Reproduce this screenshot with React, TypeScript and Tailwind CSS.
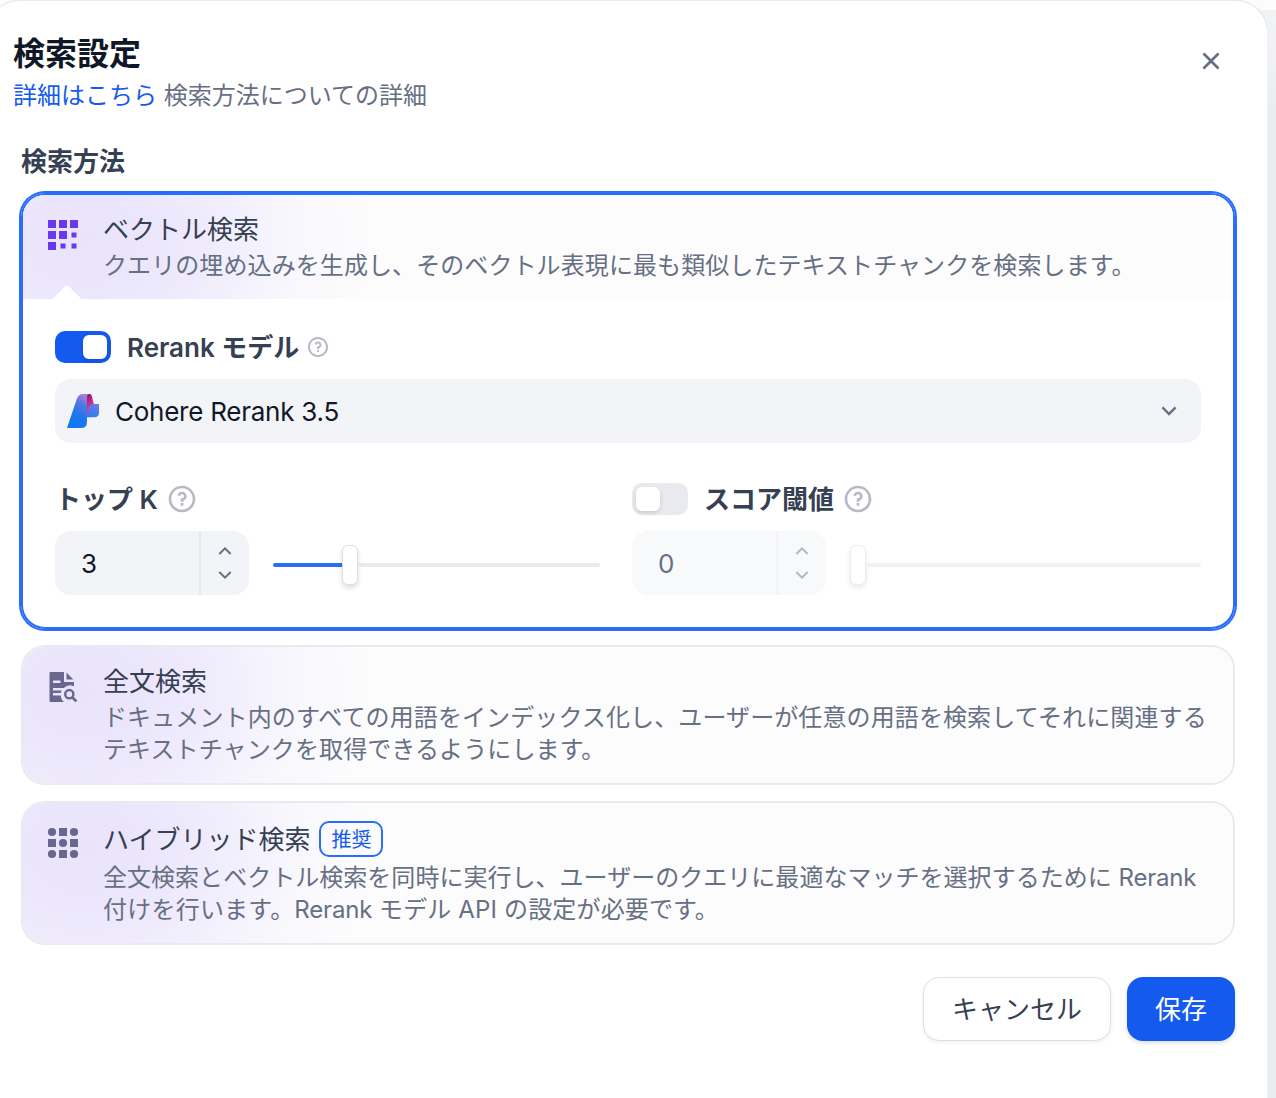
import type { ReactNode } from 'react'
import { RiArrowDownSLine, RiArrowUpSLine, RiCloseLine, RiQuestionLine } from 'react-icons/ri'

function VectorIcon() {
  return (
    <svg width="32" height="32" viewBox="0 0 32 32" fill="#6938ef">
      <path d="M1 1h8v8H1zM12 1h8v8h-8zM23 1h8v8h-8zM1 12h8v8H1zM12 12h8v8h-8zM24.5 13.5h5v5h-5zM1 23h8v8H1zM13.5 24.5h5v5h-5zM24.5 24.5h5v5h-5z" />
    </svg>
  )
}

function FullTextIcon() {
  return (
    <svg width="32" height="32" viewBox="0 0 32 32" className="text-[#68678f]">
      <g fill="currentColor" transform="translate(-0.5 0)">
        <path fillRule="evenodd" d="M4 1H17.5V11H27.5V15.4A8.5 8.5 0 0 0 17.3 17H6.5V19.5H15.2A8 8 0 0 0 14.3 22H6.5V24.5H14.4A8.5 8.5 0 0 0 17.6 31H4A1 1 0 0 1 3 30V2A1 1 0 0 1 4 1ZM6.5 9.5V12H14V9.5Z" />
        <path d="M20 1.6L26.8 8.5H20Z" />
      </g>
      <circle cx="22.3" cy="23.2" r="4.1" fill="none" stroke="currentColor" strokeWidth="2.5" />
      <path d="M25.2 26.2L29.4 30.4" stroke="currentColor" strokeWidth="2.7" />
    </svg>
  )
}

function HybridIcon() {
  return (
    <svg width="32" height="32" viewBox="0 0 32 32" fill="#68678f">
      <circle cx="5" cy="5" r="4.1" />
      <circle cx="27" cy="5" r="4.1" />
      <circle cx="16" cy="16" r="4.1" />
      <circle cx="5" cy="27" r="4.1" />
      <circle cx="27" cy="27" r="4.1" />
      <path d="M12 1h8v8h-8zM1 12h8v8H1zM23 12h8v8h-8zM12 23h8v8h-8z" />
    </svg>
  )
}

function ModelLogo() {
  return (
    <svg width="32" height="34" viewBox="0 0 32 34">
      <defs>
        <linearGradient id="logo-body" x1="0.75" y1="0" x2="0.4" y2="1">
          <stop offset="0" stopColor="#b67adb" />
          <stop offset="0.3" stopColor="#4c78e4" />
          <stop offset="0.65" stopColor="#1c75ec" />
          <stop offset="1" stopColor="#0f7af2" />
        </linearGradient>
        <linearGradient id="logo-side" x1="0" y1="0" x2="0.2" y2="1">
          <stop offset="0" stopColor="#6b1d68" />
          <stop offset="0.45" stopColor="#c92a8c" />
          <stop offset="1" stopColor="#f33fae" />
        </linearGradient>
        <linearGradient id="logo-arm" x1="0.7" y1="0" x2="0.3" y2="1">
          <stop offset="0" stopColor="#6a7be6" />
          <stop offset="1" stopColor="#2a7bee" />
        </linearGradient>
      </defs>
      <path d="M19 0H22.5Q24.3 0 24.8 2L27 11V23H20Z" fill="url(#logo-side)" />
      <path d="M26.5 10H32V18.5Q32 23.2 27.3 23.2H20V22Q21.5 20 21.8 15Q22.3 10 26.5 10Z" fill="url(#logo-arm)" />
      <path d="M16 0H22Q20 0 20 2.5V28Q20 34 14 34H0L9.7 5.2Q11.4 0 16 0Z" fill="url(#logo-body)" />
    </svg>
  )
}

function Toggle({ on }: { on?: boolean }) {
  return (
    <div className={`flex h-8 w-14 shrink-0 rounded-[10px] p-1 ${on ? 'justify-end bg-[#155aef]' : 'bg-[#e9eaef]'}`}>
      <div className="size-6 rounded-[6px] bg-white shadow-[0_2px_4px_rgba(16,24,40,0.14)]" />
    </div>
  )
}

function NumberInput({ value, disabled }: { value: string; disabled?: boolean }) {
  return (
    <div className={`flex h-16 w-[194px] shrink-0 rounded-2xl ${disabled ? 'bg-[#f8f9fb]' : 'bg-[#f2f4f7]'}`}>
      <div className={`w-[144px] pl-[26px] text-[26px] leading-[66px] ${disabled ? 'text-[#676f83]' : 'text-[#101828]'}`}>
        {value}
      </div>
      <div
        className={`flex flex-1 flex-col items-center justify-center border-l-2 ${disabled ? 'border-[#f4f4f7] text-[#b3b7c1]' : 'border-[#e9eaef] text-[#676f83]'}`}
      >
        <RiArrowUpSLine size={24} />
        <RiArrowDownSLine size={24} />
      </div>
    </div>
  )
}

function Glow({ children, className }: { children: ReactNode; className: string }) {
  return (
    <div
      className={`flex bg-[#fcfcfd] bg-[radial-gradient(ellipse_290px_240px_at_60px_44px,#e9e4fa_0%,#ebe6fb_22%,#efebfc_42%,#f5f3fd_62%,#f9f9fd_80%,#fcfcfd_100%)] ${className}`}
    >
      {children}
    </div>
  )
}

export default function App() {
  return (
    <div
      lang="ja"
      className="flex h-[1098px] w-[1276px] overflow-hidden bg-[linear-gradient(#fcfcfd_0,#fcfcfd_10px,#f2f3f7_10px,#f0f2f5_60px,#e9edf0_110px)] font-['Inter','Noto_Sans_CJK_JP',sans-serif] text-[#354052]"
    >
      <div className="-ml-[34px] h-[1200px] w-[1302px] shrink-0 rounded-tr-[34px] bg-[#fdfdfd]">
        <div className="ml-[22px] h-[1200px] w-[1279px] rounded-[32px] border-t border-[#e9eaeb] bg-white pl-[33px] pr-8 shadow-[0_0_2px_rgba(16,24,40,0.16)]">
          <div className="-ml-2 flex h-[143px] justify-between pt-[33px]">
            <div>
              <h1 className="h-10 text-[32px] font-bold leading-[40px] text-[#101828]">検索設定</h1>
              <p className="mt-1 text-[24px] leading-[36px] text-[#676f83]">
                <span className="text-[#155aef]">詳細はこちら</span> 検索方法についての詳細
              </p>
            </div>
            <RiCloseLine size={32} className="mr-2 mt-[11px] text-[#676f83]" />
          </div>
          <h2 className="h-[49px] text-[26px] font-bold leading-[36px]">検索方法</h2>

          <section className="h-[436px] w-[1214px] overflow-hidden rounded-3xl border-2 border-[#296dff] ring-2 ring-[#296dff]">
            <Glow className="h-[104px] pl-6">
              <div className="flex w-14 flex-col pt-6">
                <VectorIcon />
                <svg width="30" height="14" viewBox="0 0 30 14" className="ml-[5px] mt-auto" fill="white">
                  <path d="M0.5 14L12.5 2Q15 -0.6 17.5 2L29.5 14Z" />
                </svg>
              </div>
              <div className="pt-[17px]">
                <h3 className="text-[26px] leading-9">ベクトル検索</h3>
                <p className="whitespace-nowrap text-[24px] leading-9 tracking-[0.09px] text-[#676f83]">
                  クエリの埋め込みを生成し、そのベクトル表現に最も類似したテキストチャンクを検索します。
                </p>
              </div>
            </Glow>
            <div className="px-8 pt-8">
              <div className="flex h-8 items-center">
                <Toggle on />
                <span className="ml-4 pt-0.5 text-[26px] font-semibold leading-8">
                  Rerank モデル
                </span>
                <RiQuestionLine size={24} className="ml-[7px] text-[#b7b9c3]" />
              </div>
              <div className="mt-4 flex h-16 items-center rounded-2xl bg-[#f2f4f7] pl-3 pr-[18px]">
                <ModelLogo />
                <span className="ml-4 flex-1 pt-px text-[26px] tracking-[-0.25px] text-[#101828]">Cohere Rerank 3.5</span>
                <RiArrowDownSLine size={28} className="text-[#676f83]" />
              </div>
              <div className="mt-10 grid grid-cols-[545px_569px] gap-x-8">
                <div>
                  <div className="flex h-8 items-center">
                    <span className="pt-0.5 text-[26px] font-semibold leading-8">トップ K</span>
                    <RiQuestionLine size={32} className="ml-2 text-[#b7b9c3]" />
                  </div>
                  <div className="mt-4 flex items-center">
                    <NumberInput value="3" />
                    <div className="ml-6 mt-1 flex h-10 flex-1 items-center">
                      <div className="h-1 w-[69px] rounded-l-full bg-[#296dff]" />
                      <div className="h-10 w-4 rounded-[6px] border border-[#dcdfe4] bg-white shadow-[0_3px_5px_rgba(16,24,40,0.14)]" />
                      <div className="h-1 flex-1 rounded-r-full bg-[#e9eaef]" />
                    </div>
                  </div>
                </div>
                <div>
                  <div className="flex h-8 items-center">
                    <Toggle />
                    <span className="ml-4 pt-0.5 text-[26px] font-semibold leading-8">スコア閾値</span>
                    <RiQuestionLine size={32} className="ml-2 text-[#b7b9c3]" />
                  </div>
                  <div className="mt-4 flex items-center">
                    <NumberInput value="0" disabled />
                    <div className="ml-6 mt-1 flex h-10 flex-1 items-center">
                      <div className="h-10 w-4 rounded-[6px] border border-[#ebecef] bg-white shadow-[0_3px_5px_rgba(16,24,40,0.09)]" />
                      <div className="h-1 flex-1 rounded-r-full bg-[#f2f2f6]" />
                    </div>
                  </div>
                </div>
              </div>
            </div>
          </section>

          <section className="mt-4 h-[140px] w-[1214px] overflow-hidden rounded-3xl border-2 border-[#e9eaef]">
            <Glow className="h-full pl-6 pt-[15px]">
              <div className="w-14 pt-[9px]">
                <FullTextIcon />
              </div>
              <div>
                <h3 className="text-[26px] leading-10">全文検索</h3>
                <p className="whitespace-nowrap text-[24px] leading-8 tracking-[0.11px] text-[#676f83]">
                  ドキュメント内のすべての用語をインデックス化し、ユーザーが任意の用語を検索してそれに関連する
                  <br />
                  テキストチャンクを取得できるようにします。
                </p>
              </div>
            </Glow>
          </section>

          <section className="mt-4 h-[144px] w-[1214px] overflow-hidden rounded-3xl border-2 border-[#e9eaef]">
            <Glow className="h-full pl-6 pt-[18px]">
              <div className="w-14 pt-1.5">
                <HybridIcon />
              </div>
              <div>
                <div className="flex h-9 items-center">
                  <h3 className="pt-0.5 text-[26px] leading-9">ハイブリッド検索</h3>
                  <span className="ml-[9px] flex h-9 w-16 items-center justify-center rounded-[10px] border-2 border-[#296dff] pt-0.5 text-[20px] leading-8 text-[#155aef]">
                    推奨
                  </span>
                </div>
                <p className="mt-[5px] whitespace-nowrap text-[24px] leading-8 text-[#676f83]">
                  <span className="tracking-[0.03px]">全文検索とベクトル検索を同時に実行し、ユーザーのクエリに最適なマッチを選択するために </span>
                  <span className="tracking-[-0.2px]">Rerank</span>
                  <br />
                  <span className="tracking-[0.22px]">付けを行います。</span>
                  <span className="tracking-[-0.2px]">Rerank</span>
                  <span className="tracking-[0.15px]"> モデル API の設定が必要です。</span>
                </p>
              </div>
            </Glow>
          </section>

          <div className="mt-8 flex w-[1214px] justify-end gap-4">
            <button className="h-16 w-[188px] rounded-2xl border border-[#dcdfe4] bg-white text-[26px] shadow-[0_2px_4px_rgba(16,24,40,0.06)]">
              キャンセル
            </button>
            <button className="h-16 w-[108px] rounded-2xl bg-[#155aef] text-[26px] text-white shadow-[0_2px_4px_rgba(16,24,40,0.15)]">
              保存
            </button>
          </div>
        </div>
      </div>
    </div>
  )
}
